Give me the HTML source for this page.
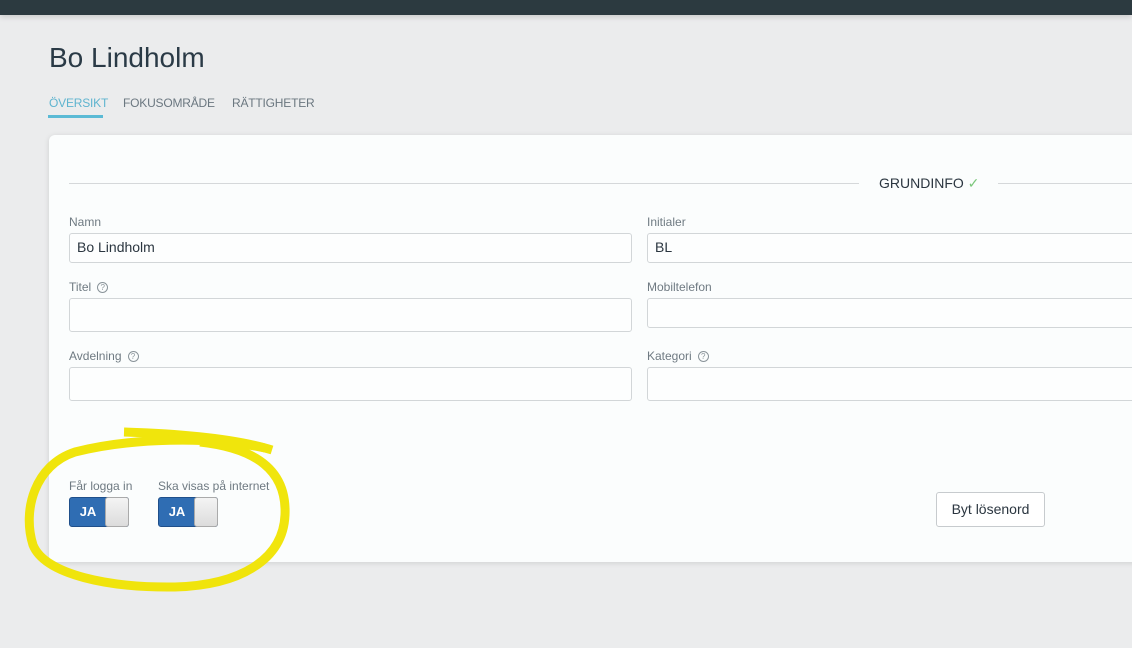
<!DOCTYPE html>
<html><head><meta charset="utf-8"><style>
*{box-sizing:border-box;margin:0;padding:0}
body{width:1132px;height:648px;overflow:hidden;background:#ebeced;font-family:"Liberation Sans",sans-serif;position:relative}
.top{position:absolute;left:0;top:0;width:1132px;height:15px;background:#2c3a40;box-shadow:0 2px 6px rgba(0,0,0,.15)}
h1{position:absolute;left:49px;top:42px;font-weight:400;font-size:28px;color:#2a3a46;letter-spacing:0}
.tab{position:absolute;top:96px;font-size:12px;color:#6b7780;letter-spacing:-.2px}
.card{position:absolute;left:49px;top:135px;width:1100px;height:427px;background:#fbfdfd;border-radius:6px;box-shadow:0 1px 6px rgba(0,0,0,.12)}
.a{position:absolute}
.lbl{position:absolute;font-size:12px;color:#6f7a82}
.inp{position:absolute;border:1px solid #d2d6d8;border-radius:3px;background:#fdfefe;font-size:14px;color:#2b3640;padding-left:7px;line-height:27px}
.q{display:inline-block;width:11px;height:11px;border:1px solid #8a949a;border-radius:50%;font-size:8px;line-height:9px;text-align:center;margin-left:6px;vertical-align:1px;color:#8a949a}
.tg{position:absolute;width:60px;height:30px;border-radius:3px;background:#2f6db3;border:1px solid #1f4f8a}
.tg b{position:absolute;left:0;width:36px;top:0;line-height:28px;text-align:center;color:#fff;font-size:13px}
.tg i{position:absolute;right:-1px;top:-1px;width:24px;height:30px;background:linear-gradient(#f4f4f4,#dcdcdc);border:1px solid #aaa;border-radius:3px}
</style></head><body>
<div class="top"></div>
<h1>Bo Lindholm</h1>
<div class="tab" style="left:49px;color:#5fb4cf">ÖVERSIKT</div>
<div class="a" style="left:48px;top:115px;width:55px;height:3px;background:#5bbad5"></div>
<div class="tab" style="left:123px">FOKUSOMRÅDE</div>
<div class="tab" style="left:232px">RÄTTIGHETER</div>
<div class="card"></div>
<div class="a" style="left:69px;top:183px;width:790px;height:1px;background:#d5d8da"></div>
<div class="a" style="left:998px;top:183px;width:134px;height:1px;background:#d5d8da"></div>
<div class="a" style="left:879px;top:175px;font-size:14px;color:#2b3640">GRUNDINFO <span style="color:#7cc77c">✓</span></div>
<div class="lbl" style="left:69px;top:215px">Namn</div>
<div class="inp" style="left:69px;top:233px;width:563px;height:30px">Bo Lindholm</div>
<div class="lbl" style="left:647px;top:215px">Initialer</div>
<div class="inp" style="left:647px;top:233px;width:500px;height:30px">BL</div>
<div class="lbl" style="left:69px;top:280px">Titel<span class="q">?</span></div>
<div class="inp" style="left:69px;top:298px;width:563px;height:34px"></div>
<div class="lbl" style="left:647px;top:280px">Mobiltelefon</div>
<div class="inp" style="left:647px;top:298px;width:500px;height:30px"></div>
<div class="lbl" style="left:69px;top:349px">Avdelning<span class="q">?</span></div>
<div class="inp" style="left:69px;top:367px;width:563px;height:34px"></div>
<div class="lbl" style="left:647px;top:349px">Kategori<span class="q">?</span></div>
<div class="inp" style="left:647px;top:367px;width:500px;height:34px"></div>
<div class="lbl" style="left:69px;top:479px">Får logga in</div>
<div class="lbl" style="left:158px;top:479px">Ska visas på internet</div>
<div class="tg" style="left:69px;top:497px"><b>JA</b><i></i></div>
<div class="tg" style="left:158px;top:497px"><b>JA</b><i></i></div>
<div class="a" style="left:936px;top:492px;width:109px;height:35px;border:1px solid #c7cbce;border-radius:3px;background:#fff;font-size:14px;color:#2b3640;text-align:center;line-height:33px">Byt lösenord</div>
<svg class="a" style="left:0;top:0" width="1132" height="648"><g fill="none" stroke="#f0e400" stroke-width="9" stroke-linecap="butt" opacity=".95">
<path d="M124 432 C190 434 240 440 272 450"/>
<path d="M265 448 C210 436 130 438 75 452 C35 465 22 510 33 545 C45 575 110 588 175 587 C240 585 283 560 285 515 C287 470 255 448 200 442"/>
</g></svg>
</body></html>
